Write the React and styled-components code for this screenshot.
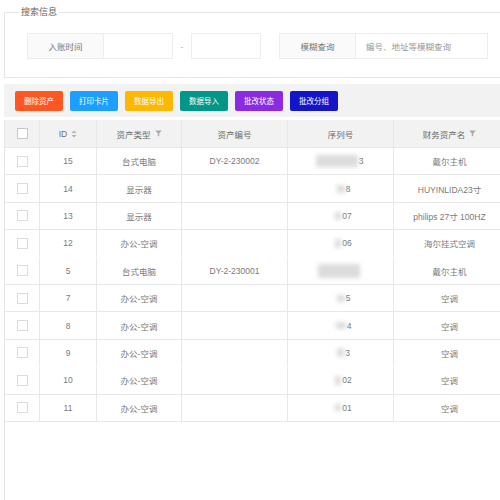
import styled, { createGlobalStyle } from "styled-components";

const GlobalStyle = createGlobalStyle`
  html, body {
    margin: 0;
    padding: 0;
    background: #fff;
    overflow: hidden;
  }
  body {
    font-family: "Liberation Sans", "Noto Sans CJK SC", sans-serif;
    color: #777;
  }
`;

const Page = styled.div`
  width: 500px;
  height: 500px;
  padding-left: 4px;
  display: flex;
  flex-direction: column;
  box-sizing: border-box;
  overflow: hidden;
`;

const SearchBox = styled.fieldset`
  margin: 7px 0 0 0;
  padding: 16px 0 18px 22px;
  border: 1px solid #e6e6e6;
  border-right: none;
`;

const Legend = styled.legend`
  margin-left: -8px;
  padding: 0 2px;
  font-size: 9px;
  line-height: 10px;
  color: #666;
`;

const SearchRow = styled.div`
  display: flex;
  align-items: center;
`;

const FieldLabel = styled.div`
  width: ${(p) => p.$w}px;
  height: 26px;
  box-sizing: border-box;
  background: #fafafa;
  border: 1px solid #ededed;
  font-size: 8.5px;
  color: #777;
  display: flex;
  align-items: center;
  justify-content: center;
`;

const Input = styled.div`
  width: ${(p) => p.$w}px;
  height: 26px;
  box-sizing: border-box;
  border: 1px solid #ededed;
  border-left: none;
  background: #fff;
  font-size: 8.5px;
  color: #9a9a9a;
  display: flex;
  align-items: center;
  padding-left: 10px;
`;

const Dash = styled.span`
  width: 18px;
  text-align: center;
  font-size: 8px;
  color: #999;
`;

const LoneInput = styled(Input)`
  border-left: 1px solid #ededed;
  margin-right: 18px;
`;

const Toolbar = styled.div`
  margin-top: 6px;
  height: 33px;
  box-sizing: border-box;
  background: #f2f2f2;
  padding: 0 11px;
  display: flex;
  align-items: center;
  gap: 7px;
`;

const Button = styled.div`
  width: 48px;
  height: 20px;
  border-radius: 2px;
  background: ${(p) => p.$bg};
  color: #fff;
  font-size: 7.5px;
  display: flex;
  align-items: center;
  justify-content: center;
`;

const Table = styled.div`
  margin-top: 3px;
  flex: 1;
  border-left: 1px solid #e6e6e6;
  overflow: hidden;
`;

const Row = styled.div`
  display: grid;
  grid-template-columns: 35px 57px 85px 106px 106px 112px;
  height: ${(p) => (p.$head ? 28 : 27.4)}px;
  background: ${(p) => (p.$head ? "#f2f2f2" : "#fff")};
  border-bottom: 1px solid ${(p) => (p.$noLine ? "#fff" : "#e8e8e8")};
  box-sizing: border-box;
`;

const Cell = styled.div`
  border-right: 1px solid #e8e8e8;
  display: flex;
  align-items: center;
  justify-content: center;
  gap: 4px;
  font-size: 8.5px;
  color: ${(p) => (p.$head ? "#6a6a6a" : "#7a7a7a")};
  white-space: nowrap;
  overflow: hidden;
`;

const Check = styled.span`
  width: 11px;
  height: 11px;
  box-sizing: border-box;
  border: 1px solid ${(p) => (p.$head ? "#c8c8c8" : "#dcdcdc")};
  background: #fff;
`;

const Serial = styled.span`
  display: inline-flex;
  align-items: center;
  margin-left: ${(p) => p.$shift}px;
`;

const Blur = styled.span`
  width: ${(p) => p.$w}px;
  height: ${(p) => p.$h}px;
  background: #dcdcdc;
  filter: blur(2px);
  margin-right: 1px;
`;

const SortIcon = () => (
  <svg width="6" height="8" viewBox="0 0 6 8">
    <path d="M3 0.5 L5.5 3 H0.5 Z" fill="#b2b2b2" />
    <path d="M3 7.5 L5.5 5 H0.5 Z" fill="#b2b2b2" />
  </svg>
);

const FilterIcon = () => (
  <svg width="7" height="7" viewBox="0 0 7 7">
    <path d="M0.3 0.5 H6.7 L4.2 3.6 V6.5 L2.8 5.8 V3.6 Z" fill="#aaa" />
  </svg>
);

const buttons = [
  ["删除资产", "#ff5722"],
  ["打印卡片", "#1e9fff"],
  ["数据导出", "#ffb800"],
  ["数据导入", "#009688"],
  ["批改状态", "#8a2be2"],
  ["批改分组", "#1414c8"],
];

const rows = [
  { id: 15, type: "台式电脑", code: "DY-2-230002", blur: [42, 12], tail: "3", name: "戴尔主机" },
  { id: 14, type: "显示器", code: "", blur: [8, 8], tail: "8", name: "HUYINLIDA23寸" },
  { id: 13, type: "显示器", code: "", blur: [6, 8], tail: "07", name: "philips 27寸 100HZ" },
  { id: 12, type: "办公-空调", code: "", blur: [6, 9], tail: "06", name: "海尔挂式空调", noLine: true },
  { id: 5, type: "台式电脑", code: "DY-2-230001", blur: [42, 14], tail: "", name: "戴尔主机" },
  { id: 7, type: "办公-空调", code: "", blur: [8, 7], tail: "5", name: "空调" },
  { id: 8, type: "办公-空调", code: "", blur: [10, 7], tail: "4", name: "空调" },
  { id: 9, type: "办公-空调", code: "", blur: [7, 9], tail: "3", name: "空调", noLine: true },
  { id: 10, type: "办公-空调", code: "", blur: [6, 9], tail: "02", name: "空调" },
  { id: 11, type: "办公-空调", code: "", blur: [6, 7], tail: "01", name: "空调" },
];

export default function App() {
  return (
    <>
      <GlobalStyle />
      <Page>
        <SearchBox>
          <Legend>搜索信息</Legend>
          <SearchRow>
            <FieldLabel $w={77}>入账时间</FieldLabel>
            <Input $w={69} />
            <Dash>-</Dash>
            <LoneInput $w={70} />
            <FieldLabel $w={77}>模糊查询</FieldLabel>
            <Input $w={132}>编号、地址等模糊查询</Input>
          </SearchRow>
        </SearchBox>

        <Toolbar>
          {buttons.map(([label, bg]) => (
            <Button key={label} $bg={bg}>
              {label}
            </Button>
          ))}
        </Toolbar>

        <Table>
          <Row $head>
            <Cell $head>
              <Check $head />
            </Cell>
            <Cell $head>
              ID <SortIcon />
            </Cell>
            <Cell $head>
              资产类型 <FilterIcon />
            </Cell>
            <Cell $head>资产编号</Cell>
            <Cell $head>序列号</Cell>
            <Cell $head>
              财务资产名 <FilterIcon />
            </Cell>
          </Row>
          {rows.map((r) => (
            <Row key={r.id} $noLine={r.noLine}>
              <Cell>
                <Check />
              </Cell>
              <Cell>{r.id}</Cell>
              <Cell>{r.type}</Cell>
              <Cell>{r.code}</Cell>
              <Cell>
                <Serial $shift={r.blur[0] > 20 ? -2 : 6}>
                  <Blur $w={r.blur[0]} $h={r.blur[1]} />
                  {r.tail}
                </Serial>
              </Cell>
              <Cell>{r.name}</Cell>
            </Row>
          ))}
        </Table>
      </Page>
    </>
  );
}
